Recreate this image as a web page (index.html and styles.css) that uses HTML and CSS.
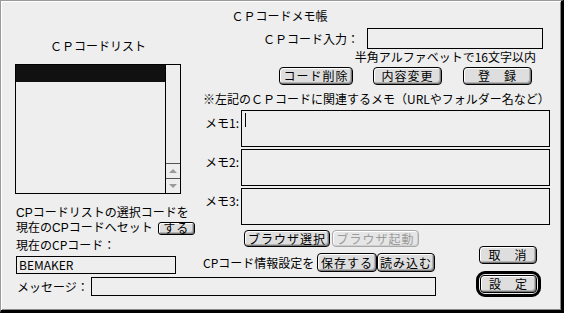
FILE: index.html
```html
<!DOCTYPE html>
<html lang="ja">
<head>
<meta charset="utf-8">
<title>CPコードメモ帳</title>
<link rel="stylesheet" href="styles.css">
</head>
<body>
<div class="window">
  <div class="title">ＣＰコードメモ帳</div>
  <div class="body">
    <div class="left">
      <div class="list-label">ＣＰコードリスト</div>
      <div class="listbox">
        <div class="list-items">
          <div class="list-row selected"></div>
        </div>
        <div class="scrollbar">
          <div class="track"></div>
          <div class="arrow"><span class="tri-up"></span></div>
          <div class="arrow"><span class="tri-down"></span></div>
        </div>
      </div>
      <div class="set-text">
        <div class="line">CPコードリストの選択コードを</div>
        <div class="line">現在のCPコードへセット<button class="btn btn-small">する</button></div>
      </div>
      <div class="current-label">現在のCPコード：</div>
      <div class="field current-field">BEMAKER</div>
    </div>

    <div class="top">
      <div class="cp-row"><span>ＣＰコード入力：</span><div class="field cp-input"></div></div>
      <div class="hint">半角アルファベットで16文字以内</div>
      <div class="edit-buttons">
        <button class="btn b-del">コード削除</button>
        <button class="btn b-change">内容変更</button>
        <button class="btn b-reg">登　録</button>
      </div>
      <div class="note">※左記のＣＰコードに関連するメモ（URLやフォルダー名など）</div>
      <div class="memos">
        <div class="memo-row"><span class="memo-label">メモ1:</span><div class="field memo-box"><span class="caret"></span></div></div>
        <div class="memo-row"><span class="memo-label">メモ2:</span><div class="field memo-box"></div></div>
        <div class="memo-row"><span class="memo-label">メモ3:</span><div class="field memo-box"></div></div>
      </div>
    </div>

    <div class="mid">
      <div class="browser-row">
        <button class="btn b-browser">ブラウザ選択</button>
        <button class="btn b-launch disabled">ブラウザ起動</button>
      </div>
      <div class="save-row">
        <span class="save-label">CPコード情報設定を</span>
        <button class="btn b-save">保存する</button>
        <button class="btn b-load">読み込む</button>
      </div>
    </div>

    <div class="btns">
      <button class="btn b-cancel">取　消</button>
      <div class="default-ring"><button class="btn b-ok">設　定</button></div>
    </div>

    <div class="msg">
      <span class="msg-label">メッセージ：</span>
      <div class="field msg-box"></div>
    </div>
  </div>
</div>
</body>
</html>
```

FILE: styles.css
```css
html, body {
  margin: 0;
  padding: 0;
  background: #eeeeee;
}

body {
  font-family: "Noto Sans CJK JP", "Noto Sans", sans-serif;
  font-size: 12px;
  color: #000;
}

.window {
  width: 564px;
  height: 313px;
  box-sizing: border-box;
  background: #eeeeee;
  border-style: solid;
  border-width: 1px 3px 3px 1px;
  border-color: #9a9a9a #000 #000 #9a9a9a;
  box-shadow: inset 1px 1px 0 #fff, inset -1px -1px 0 #8a8a8a;
  padding: 7px 11px 0 14px;
}

.title {
  line-height: 16px;
  text-align: center;
  padding-right: 6px;
}

.body {
  margin-top: 2px;
  display: grid;
  grid-template-columns: 185px 240px 110px;
  grid-template-rows: 201px 47px 23px;
  grid-template-areas:
    "left top top"
    "left mid btns"
    "msg msg btns";
}

/* generic */
.field {
  border: 1px solid #000;
  box-sizing: border-box;
  background: transparent;
}

.btn {
  -webkit-appearance: none;
  appearance: none;
  margin: 0;
  padding: 0;
  font-family: inherit;
  font-size: 12px;
  letter-spacing: 1px;
  color: #000;
  background: #dedede;
  border: 1px solid #000;
  border-radius: 4px;
  box-sizing: border-box;
  box-shadow: inset 1px 1px 0 #fff, inset -1px -1px 0 #7a7a7a, inset -2px -2px 0 #b4b4b4;
  display: flex;
  align-items: center;
  justify-content: center;
  line-height: 1;
  white-space: nowrap;
}

.btn.disabled {
  color: #9a9a9a;
  border-color: #a8a8a8;
  background: #e6e6e6;
  box-shadow: inset 1px 1px 0 #fff, inset -1px -1px 0 #cfcfcf;
}

/* left column */
.left {
  grid-area: left;
  display: flex;
  flex-direction: column;
  align-items: flex-start;
}

.list-label {
  margin-top: 12px;
  width: 166px;
  text-align: center;
  line-height: 15px;
}

.listbox {
  margin-top: 11px;
  width: 166px;
  height: 130px;
  box-sizing: border-box;
  border: 1px solid #000;
  display: flex;
}

.list-items {
  flex: 1;
}

.list-row.selected {
  height: 17px;
  background: #111;
}

.scrollbar {
  width: 15px;
  box-sizing: border-box;
  border-left: 1px solid #000;
  display: flex;
  flex-direction: column;
}

.track {
  flex: 1;
}

.arrow {
  height: 15px;
  box-sizing: border-box;
  border-top: 1px solid #555;
  display: flex;
  align-items: center;
  justify-content: center;
}

.tri-up {
  width: 0;
  height: 0;
  border-left: 4px solid transparent;
  border-right: 4px solid transparent;
  border-bottom: 4px solid #9a9a9a;
}

.tri-down {
  width: 0;
  height: 0;
  border-left: 4px solid transparent;
  border-right: 4px solid transparent;
  border-top: 4px solid #9a9a9a;
}

.set-text {
  margin-top: 12px;
  padding-left: 1px;
  font-family: "Liberation Sans", "Noto Sans CJK JP", sans-serif;
}

.set-text .line {
  height: 15px;
  line-height: 15px;
  display: flex;
  align-items: center;
  white-space: nowrap;
}

.btn-small {
  width: 37px;
  height: 13px;
  margin-left: 5px;
  border-radius: 3px;
}

.current-label {
  margin-top: 2px;
  line-height: 14px;
  padding-left: 1px;
}

.current-field {
  margin-top: 4px;
  margin-left: 1px;
  width: 160px;
  height: 18px;
  padding-left: 2px;
  line-height: 16px;
}

/* top right area */
.top {
  grid-area: top;
  display: flex;
  flex-direction: column;
}

.cp-row {
  margin-top: 2px;
  display: flex;
  justify-content: flex-end;
  align-items: center;
  gap: 8px;
  padding-right: 7px;
}

.cp-row span {
  line-height: 15px;
}

.cp-input {
  width: 176px;
  height: 21px;
}

.hint {
  margin-top: 1px;
  line-height: 14px;
  text-align: right;
  padding-right: 14px;
}

.edit-buttons {
  margin-top: 3px;
  display: flex;
  padding-left: 79px;
  height: 18px;
}

.b-del { width: 74px; margin-right: 20px; }
.b-change { width: 69px; margin-right: 21px; }
.b-reg { width: 69px; }

.note {
  margin-top: 6px;
  line-height: 15px;
  padding-left: 3px;
  white-space: nowrap;
}

.memos {
  margin-top: 4px;
  display: flex;
  flex-direction: column;
  gap: 2px;
}

.memo-row {
  display: flex;
}

.memo-label {
  width: 41px;
  box-sizing: border-box;
  padding-right: 2px;
  padding-top: 5px;
  text-align: right;
  line-height: 15px;
}

.memo-box {
  width: 309px;
  height: 37px;
  display: flex;
  align-items: flex-start;
  padding: 2px 3px;
}

.caret {
  width: 1px;
  height: 14px;
  background: #000;
}

/* middle lower area */
.mid {
  grid-area: mid;
  display: flex;
  flex-direction: column;
}

.browser-row {
  margin-top: 3px;
  display: flex;
  gap: 2px;
  padding-left: 44px;
  height: 17px;
}

.b-browser { width: 86px; }
.b-launch { width: 87px; }

.save-row {
  margin-top: 6px;
  display: flex;
  align-items: center;
  height: 19px;
  padding-left: 3px;
}

.save-label {
  width: 114px;
  white-space: nowrap;
}

.b-save { width: 60px; height: 19px; }
.b-load { width: 58px; height: 19px; }

/* right buttons */
.btns {
  grid-area: btns;
  display: flex;
  flex-direction: column;
  align-items: flex-start;
}

.b-cancel {
  margin-top: 19px;
  margin-left: 39px;
  width: 58px;
  height: 18px;
}

.default-ring {
  margin-top: 7px;
  margin-left: 36px;
  width: 65px;
  height: 26px;
  box-sizing: border-box;
  border: 3px solid #000;
  border-radius: 9px;
  padding: 1px;
  display: flex;
}

.b-ok {
  flex: 1;
}

/* message row */
.msg {
  grid-area: msg;
  align-self: start;
  margin-top: 3px;
  display: flex;
  align-items: center;
  height: 19px;
}

.msg-label {
  width: 76px;
  box-sizing: border-box;
  padding-left: 2px;
  white-space: nowrap;
}

.msg-box {
  width: 345px;
  height: 19px;
}
```
